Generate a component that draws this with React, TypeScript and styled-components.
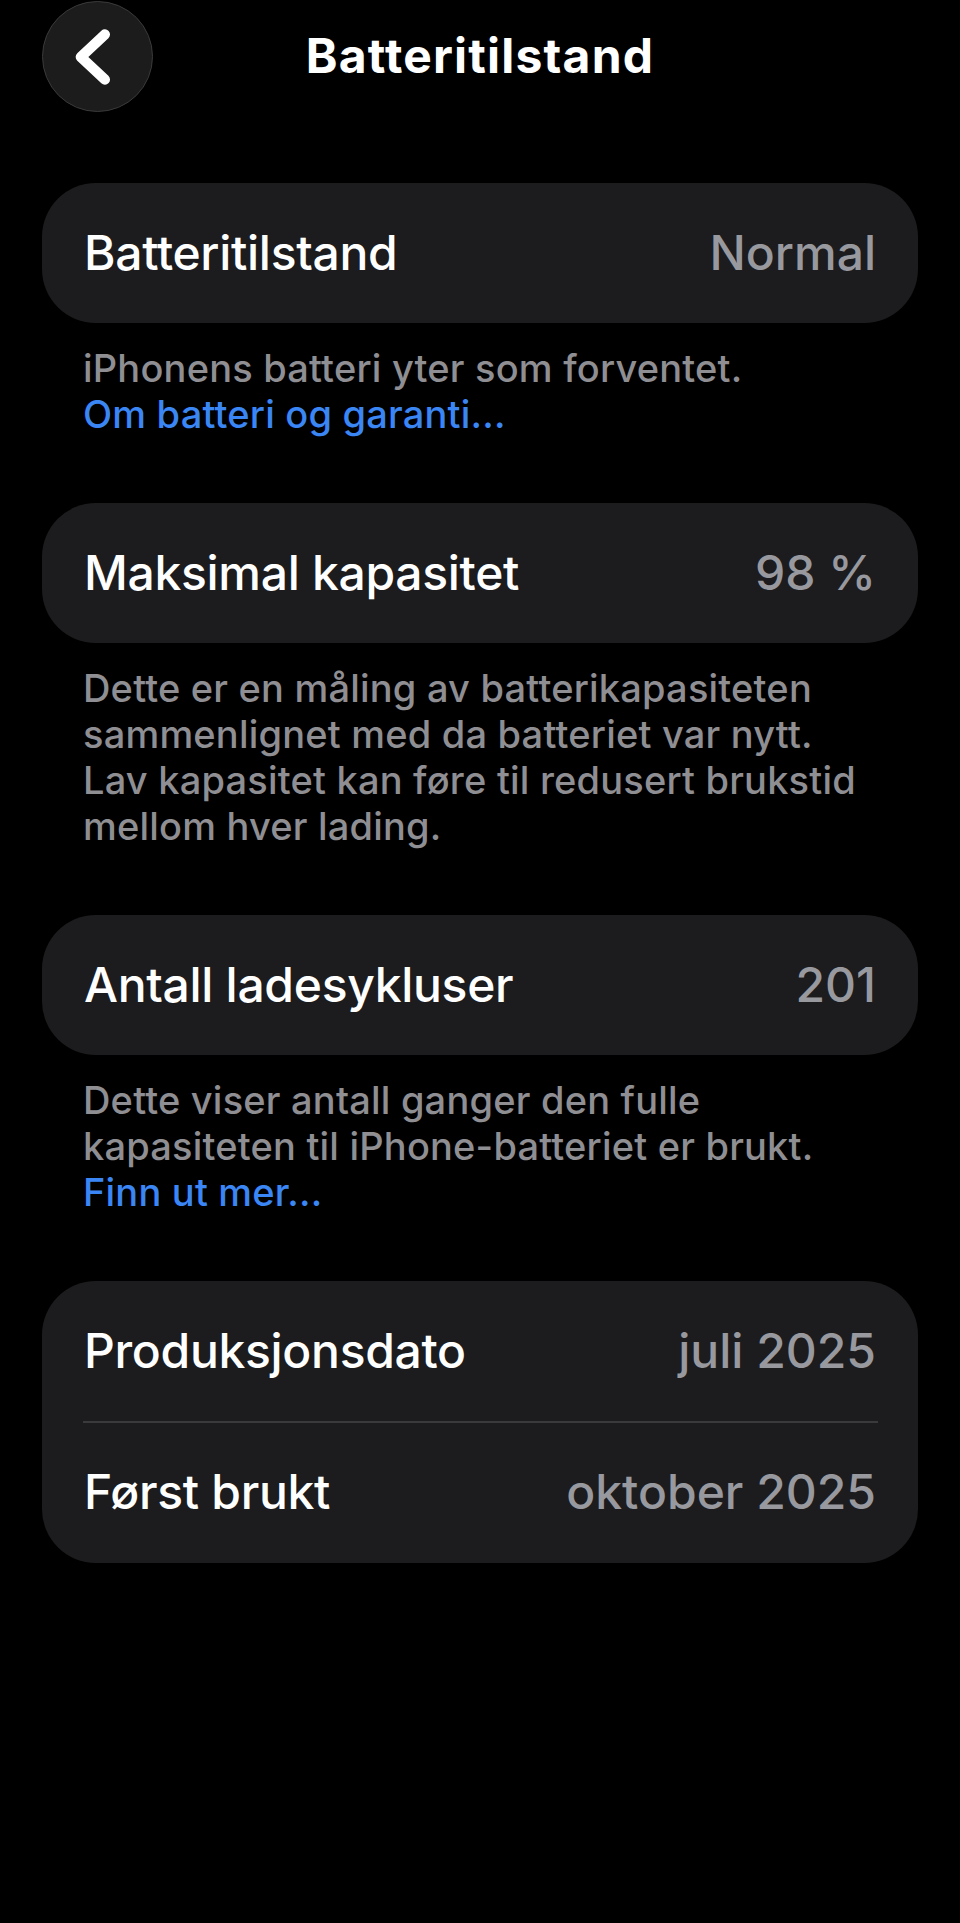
import React from "react";
import styled, { createGlobalStyle } from "styled-components";

const GlobalStyle = createGlobalStyle`
  html, body {
    margin: 0;
    padding: 0;
    background: #000000;
  }
  body {
    font-family: Inter, "Noto Sans", "Liberation Sans", sans-serif;
    -webkit-font-smoothing: antialiased;
  }
`;

const Page = styled.div`
  min-height: 1923px;
  background: #000000;
  padding: 0 42px;
  box-sizing: border-box;
`;

const Header = styled.header`
  height: 113px;
  display: grid;
  grid-template-columns: 111px 1fr 111px;
  align-items: center;
  margin-bottom: 70px;
`;

const BackButton = styled.button`
  width: 111px;
  height: 111px;
  border-radius: 50%;
  background: #1c1c1d;
  border: 1.5px solid #3a3a3b;
  box-sizing: border-box;
  padding: 0;
  display: flex;
  align-items: center;
  justify-content: center;
  cursor: pointer;
`;

const Title = styled.h1`
  margin: 0;
  text-align: center;
  color: #ffffff;
  font-size: 48px;
  font-weight: 700;
  letter-spacing: 1.2px;
  line-height: 1.21;
`;

const Section = styled.section`
  margin-bottom: 66px;
`;

const Card = styled.div`
  background: #1c1c1e;
  border-radius: 54px;
  overflow: hidden;
`;

const Row = styled.div`
  height: 140px;
  display: flex;
  align-items: center;
  justify-content: space-between;
  padding: 0 42px 0 42px;
  box-sizing: border-box;
`;

const Label = styled.span`
  color: #ffffff;
  font-size: 48px;
  font-weight: 500;
  letter-spacing: -0.3px;
  line-height: 1.21;
`;

const Value = styled.span`
  color: #98989f;
  font-size: 48px;
  font-weight: 500;
  letter-spacing: 0;
  line-height: 1.21;
`;

const Divider = styled.div`
  height: 1.5px;
  background: #3a3a3c;
  margin: 0 40px 0 41px;
`;

const Footer = styled.p`
  margin: 22px 0 0 0;
  padding: 0 41px;
  color: #8e8e93;
  font-size: 38px;
  font-weight: 500;
  letter-spacing: 0.2px;
  line-height: 46px;
  white-space: nowrap;
`;

const Link = styled.a`
  color: #3b86f5;
  text-decoration: none;
  cursor: pointer;
`;

const Chevron = () => (
  <svg width="111" height="111" viewBox="0 0 111 111" fill="none">
    <path
      d="M63 33 L38.5 56 L63 79"
      stroke="#ffffff"
      strokeWidth="10.5"
      strokeLinecap="round"
      strokeLinejoin="round"
    />
  </svg>
);

type Item = { label: string; value: string };

const InfoCard: React.FC<{ items: Item[] }> = ({ items }) => (
  <Card>
    {items.map((it, i) => (
      <React.Fragment key={it.label}>
        {i > 0 && <Divider />}
        <Row>
          <Label>{it.label}</Label>
          <Value>{it.value}</Value>
        </Row>
      </React.Fragment>
    ))}
  </Card>
);

export default function App() {
  return (
    <>
      <GlobalStyle />
      <Page>
        <Header>
          <BackButton aria-label="Tilbake">
            <Chevron />
          </BackButton>
          <Title>Batteritilstand</Title>
          <div />
        </Header>

        <Section>
          <InfoCard items={[{ label: "Batteritilstand", value: "Normal" }]} />
          <Footer>
            iPhonens batteri yter som forventet.
            <br />
            <Link>Om batteri og garanti...</Link>
          </Footer>
        </Section>

        <Section>
          <InfoCard items={[{ label: "Maksimal kapasitet", value: "98 %" }]} />
          <Footer>
            Dette er en måling av batterikapasiteten
            <br />
            sammenlignet med da batteriet var nytt.
            <br />
            Lav kapasitet kan føre til redusert brukstid
            <br />
            mellom hver lading.
          </Footer>
        </Section>

        <Section>
          <InfoCard items={[{ label: "Antall ladesykluser", value: "201" }]} />
          <Footer>
            Dette viser antall ganger den fulle
            <br />
            kapasiteten til iPhone-batteriet er brukt.
            <br />
            <Link>Finn ut mer...</Link>
          </Footer>
        </Section>

        <Section>
          <InfoCard
            items={[
              { label: "Produksjonsdato", value: "juli 2025" },
              { label: "Først brukt", value: "oktober 2025" },
            ]}
          />
        </Section>
      </Page>
    </>
  );
}
